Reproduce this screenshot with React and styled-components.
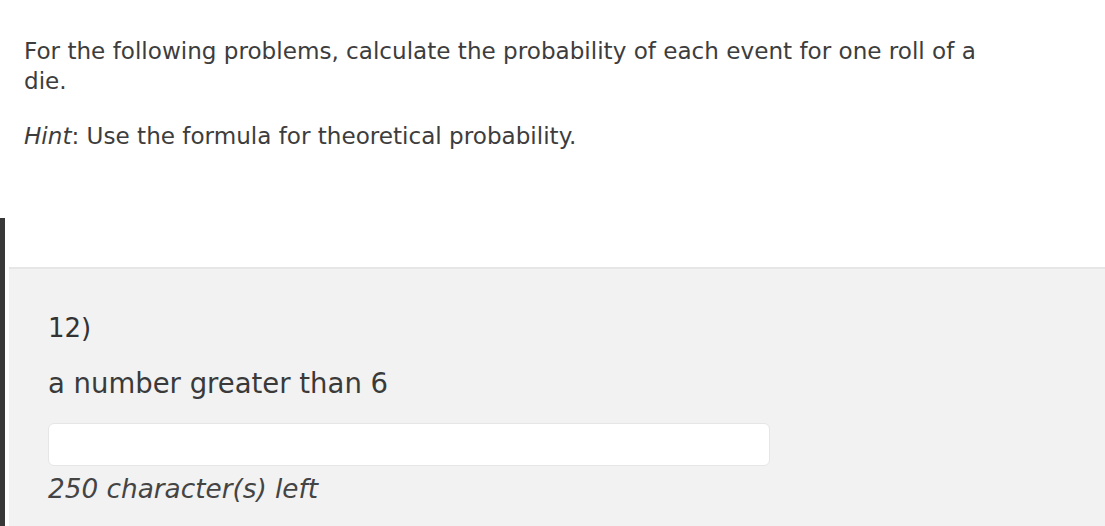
import React from "react"
import styled, { createGlobalStyle } from "styled-components"

const GlobalStyle = createGlobalStyle`
  html, body {
    margin: 0;
    padding: 0;
    background: #ffffff;
  }
  body {
    font-family: "DejaVu Sans", Verdana, sans-serif;
    color: #3d3d3d;
  }
`

const Page = styled.div`
  width: 1105px;
  height: 526px;
  overflow: hidden;
  display: flex;
  flex-direction: column;
`

const Intro = styled.div`
  padding: 36px 24px 0 24px;
  font-size: 23.1px;
  line-height: 30px;
`

const Para = styled.p`
  margin: 0 0 ${(p) => p.gap || 0}px 0;
  max-width: 990px;
`

const QuestionArea = styled.div`
  display: flex;
  margin-top: 67px;
  flex: 1;
`

const SideBar = styled.div`
  width: 5px;
  background: #383838;
  flex-shrink: 0;
`

const Panel = styled.div`
  flex: 1;
  margin: 49px 0 0 4px;
  background: #f2f2f2;
  border-top: 2px solid #e6e6e6;
  padding: 43px 0 0 39px;
`

const Number = styled.div`
  font-size: 26px;
  line-height: 32px;
  color: #333;
`

const Prompt = styled.div`
  margin-top: 22px;
  font-size: 27.5px;
  line-height: 34px;
  color: #3a3a3a;
`

const AnswerInput = styled.input`
  display: block;
  box-sizing: border-box;
  width: 722px;
  height: 43px;
  margin-top: 23px;
  background: #fff;
  border: 1px solid #e6e6e6;
  border-radius: 6px;
  outline: none;
`

const Counter = styled.div`
  margin-top: 7px;
  font-size: 26.3px;
  line-height: 32px;
  font-style: italic;
  color: #444;
`

export default function App() {
  return (
    <Page>
      <GlobalStyle />
      <Intro>
        <Para gap={25}>
          For the following problems, calculate the probability of each event
          for one roll of a die.
        </Para>
        <Para>
          <em>Hint</em>: Use the formula for theoretical probability.
        </Para>
      </Intro>
      <QuestionArea>
        <SideBar />
        <Panel>
          <Number>12)</Number>
          <Prompt>a number greater than 6</Prompt>
          <AnswerInput type="text" />
          <Counter>250 character(s) left</Counter>
        </Panel>
      </QuestionArea>
    </Page>
  )
}
